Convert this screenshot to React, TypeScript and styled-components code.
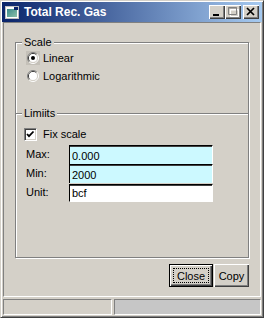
import styled, { createGlobalStyle } from "styled-components";

const GlobalStyle = createGlobalStyle`
  html, body {
    margin: 0;
    padding: 0;
    background: #d4d0c8;
  }
  body {
    font-family: "Liberation Sans", Arial, sans-serif;
    font-size: 11px;
    color: #000;
  }
`;

const Window = styled.div`
  width: 264px;
  height: 318px;
  box-sizing: border-box;
  display: flex;
  flex-direction: column;
  background: #d4d0c8;
  border: 1px solid;
  border-color: #d4d0c8 #404040 #404040 #d4d0c8;
  box-shadow: inset 1px 1px #fff, inset -1px -1px #808080;
  padding: 1px;
`;

const TitleBar = styled.div`
  height: 20px;
  flex: none;
  display: flex;
  align-items: center;
  padding: 0 3px 0 2px;
  background: linear-gradient(to right, #0a246a, #a6caf0);
  color: #fff;
  font-size: 12px;
  font-weight: bold;
`;

const TitleText = styled.span`
  margin-left: 4px;
  white-space: nowrap;
`;

const CaptionButtons = styled.div`
  margin-left: auto;
  display: flex;
  align-items: center;
`;

const CaptionButton = styled.button<{ $gap?: boolean }>`
  width: 16px;
  height: 14px;
  padding: 0;
  margin: 0 0 0 ${(p) => (p.$gap ? "2px" : "0")};
  border: 0;
  background: #d4d0c8;
  box-shadow: inset 1px 1px #fff, inset -1px -1px #404040,
    inset -2px -2px #808080;
  display: flex;
  svg {
    display: block;
  }
`;

const Client = styled.div`
  height: 275px;
  flex: none;
  box-sizing: border-box;
  margin: 0 1px;
  border: 1px solid;
  border-color: #808080 #fff #fff #808080;
  padding: 13px 11px 0;
  display: flex;
  flex-direction: column;
`;

const Frame = styled.fieldset`
  margin: 0;
  padding: 0;
  height: 222px;
  box-sizing: border-box;
  min-width: 0;
  border: 1px solid #808080;
  box-shadow: inset 1px 1px #fff, 1px 1px #fff;
`;

const Legend = styled.legend`
  margin-left: 6px;
  padding: 0 2px;
  line-height: 13px;
  background: #d4d0c8;
`;

const Section = styled.fieldset`
  margin: 22px 0 0;
  padding: 0;
  min-width: 0;
  border: 0;
  border-top: 1px solid #808080;
  box-shadow: inset 0 1px #fff;
`;

const OptionList = styled.div`
  display: flex;
  flex-direction: column;
  padding-left: 11px;
`;

const OptionRow = styled.label`
  height: 18px;
  display: flex;
  align-items: center;
  gap: 4px;
`;

const RadioBox = styled.span<{ $hot?: boolean }>`
  display: flex;
  width: 12px;
  height: 12px;
  background: ${(p) => (p.$hot ? "#c4c0b8" : "transparent")};
  box-shadow: ${(p) => (p.$hot ? "0 0 0 1px #c4c0b8" : "none")};
`;

const CheckRow = styled.label`
  height: 18px;
  margin: 5px 0 0 8px;
  display: flex;
  align-items: center;
  gap: 6px;
`;

const CheckBox = styled.span`
  width: 13px;
  height: 13px;
  box-sizing: border-box;
  background: #fff;
  border: 1px solid;
  border-color: #808080 #fff #fff #808080;
  box-shadow: inset 1px 1px #404040, inset -1px -1px #d4d0c8;
  display: flex;
`;

const FieldGrid = styled.div`
  margin: 2px 0 0 10px;
  display: grid;
  grid-template-columns: 43px 144px;
  align-items: center;
`;

const FieldLabel = styled.span`
  line-height: 19px;
`;

const Field = styled.input<{ $tint?: boolean; $last?: boolean }>`
  width: 144px;
  height: ${(p) => (p.$last ? "18px" : "19px")};
  box-sizing: border-box;
  margin: 0;
  padding: 1px 0 0 2px;
  border: 0;
  border-top: 1px solid #000;
  border-left: 1px solid #000;
  border-right: 1px solid #fff;
  border-bottom: ${(p) => (p.$last ? "1px solid #fff" : "0")};
  box-shadow: inset 0 1px #404040;
  background: ${(p) => (p.$tint ? "#ccf9ff" : "#fff")};
  font: inherit;
  color: #000;
  outline: none;
`;

const ButtonRow = styled.div`
  margin-top: 6px;
  display: flex;
  justify-content: flex-end;
  gap: 1px;
`;

const PushButton = styled.button<{ $default?: boolean }>`
  height: 23px;
  box-sizing: border-box;
  margin: 0;
  padding: 0;
  font: inherit;
  color: #000;
  background: #d4d0c8;
  border: ${(p) => (p.$default ? "1px solid #000" : "0")};
  box-shadow: inset 1px 1px #fff, inset -1px -1px #404040,
    inset -2px -2px #808080;
  outline: ${(p) => (p.$default ? "1px dotted #000" : "none")};
  outline-offset: -5px;
`;

const StatusBar = styled.div`
  height: 19px;
  flex: none;
  box-sizing: border-box;
  padding: 2px 1px 1px;
  display: flex;
  gap: 2px;
`;

const StatusPanel = styled.div<{ $fixed?: number; $shade?: boolean }>`
  box-sizing: border-box;
  flex: ${(p) => (p.$fixed ? `0 0 ${p.$fixed}px` : "1")};
  border: 1px solid;
  border-color: #808080 #fff #fff #808080;
  background: ${(p) => (p.$shade ? "#c6c6c6" : "#d4d0c8")};
`;

function AppIcon() {
  return (
    <svg width="16" height="16" viewBox="0 0 16 16">
      <rect x="1.5" y="2.5" width="13" height="12" fill="#fff" stroke="#c0c0c0" />
      <defs>
        <linearGradient id="ig" x1="0" y1="0" x2="1" y2="1">
          <stop offset="0" stopColor="#3a8a8a" />
          <stop offset="1" stopColor="#8cc0a8" />
        </linearGradient>
      </defs>
      <rect x="3" y="5" width="10" height="8" fill="url(#ig)" />
      <rect x="10" y="3" width="4" height="3" fill="#0a246a" />
    </svg>
  );
}

function Radio({ checked }: { checked?: boolean }) {
  return (
    <svg width="12" height="12" viewBox="0 0 12 12">
      <path d="M2.11 9.89 A5.5 5.5 0 0 1 9.89 2.11" fill="none" stroke="#808080" />
      <path d="M9.89 2.11 A5.5 5.5 0 0 1 2.11 9.89" fill="none" stroke="#fff" />
      <path d="M2.82 9.18 A4.5 4.5 0 0 1 9.18 2.82" fill="none" stroke="#404040" />
      <path d="M9.18 2.82 A4.5 4.5 0 0 1 2.82 9.18" fill="none" stroke="#d4d0c8" />
      <circle cx="6" cy="6" r="4" fill="#fff" />
      {checked && <circle cx="6" cy="6" r="2" fill="#000" />}
    </svg>
  );
}

export default function App() {
  return (
    <Window>
      <GlobalStyle />
      <TitleBar>
        <AppIcon />
        <TitleText>Total Rec. Gas</TitleText>
        <CaptionButtons>
          <CaptionButton aria-label="Minimize">
            <svg width="16" height="14" viewBox="0 0 16 14">
              <rect x="4" y="9" width="6" height="2" fill="#000" />
            </svg>
          </CaptionButton>
          <CaptionButton aria-label="Maximize" disabled>
            <svg width="16" height="14" viewBox="0 0 16 14">
              <path d="M4.5 3.5h8v7h-8z M4 4h9" fill="none" stroke="#fff" transform="translate(1 1)" />
              <path d="M3.5 2.5h8v7h-8z M3 3h9" fill="none" stroke="#808080" />
            </svg>
          </CaptionButton>
          <CaptionButton aria-label="Close" $gap>
            <svg width="16" height="14" viewBox="0 0 16 14">
              <path d="M4 3l7 7M11 3l-7 7" stroke="#000" strokeWidth="1.7" />
            </svg>
          </CaptionButton>
        </CaptionButtons>
      </TitleBar>

      <Client>
        <Frame>
          <Legend>Scale</Legend>
          <OptionList>
            <OptionRow>
              <RadioBox $hot>
                <Radio checked />
              </RadioBox>
              Linear
            </OptionRow>
            <OptionRow>
              <RadioBox>
                <Radio />
              </RadioBox>
              Logarithmic
            </OptionRow>
          </OptionList>

          <Section>
            <Legend>Limiits</Legend>
            <CheckRow>
              <CheckBox>
                <svg width="11" height="11" viewBox="0 0 11 11">
                  <path d="M2 5l2 2.2L8.5 2.5" fill="none" stroke="#000" strokeWidth="1.8" />
                </svg>
              </CheckBox>
              Fix scale
            </CheckRow>
            <FieldGrid>
              <FieldLabel>Max:</FieldLabel>
              <Field $tint defaultValue="0.000" />
              <FieldLabel>Min:</FieldLabel>
              <Field $tint defaultValue="2000" />
              <FieldLabel>Unit:</FieldLabel>
              <Field $last defaultValue="bcf" />
            </FieldGrid>
          </Section>
        </Frame>

        <ButtonRow>
          <PushButton $default style={{ width: 44 }}>
            Close
          </PushButton>
          <PushButton style={{ width: 35 }}>Copy</PushButton>
        </ButtonRow>
      </Client>

      <StatusBar>
        <StatusPanel $fixed={109} />
        <StatusPanel $shade />
      </StatusBar>
    </Window>
  );
}
